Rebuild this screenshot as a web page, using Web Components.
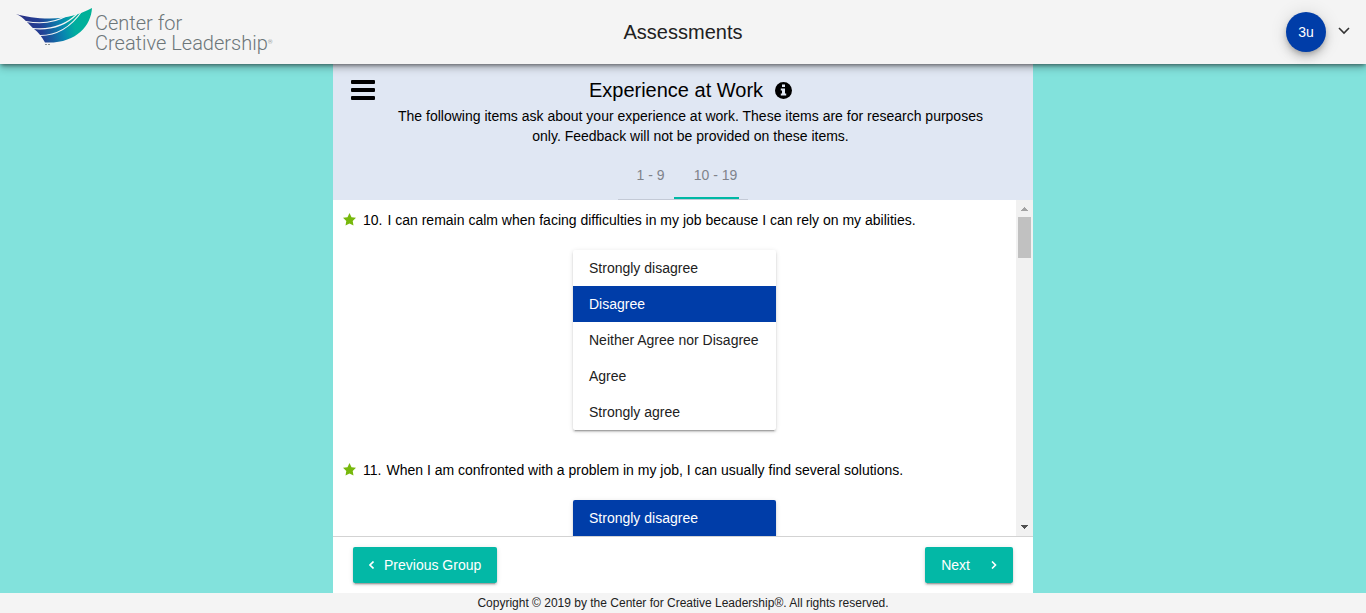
<!DOCTYPE html>
<html lang="en">
<head>
<meta charset="utf-8">
<title>Assessments</title>
<style>
  html, body { margin: 0; height: 100%; }
  body { font: 14px/20px "Liberation Sans", Arial, sans-serif; color: #000; background: #82e2dc; }
</style>
</head>
<body>
<ccl-app></ccl-app>

<template id="t-app">
  <style>
    :host { display: flex; flex-direction: column; height: 100vh; }
    main { flex: 1; min-height: 0; display: flex; flex-direction: column; width: 100%; max-width: 700px; margin: 0 auto; background: #fff; }
    ccl-questions { flex: 1; min-height: 0; }
    footer { background: #f4f4f4; font-size: 12px; line-height: 20px; text-align: center; color: #212121; }
  </style>
  <ccl-header>Assessments</ccl-header>
  <main>
    <ccl-group-intro>
      <span slot="title">Experience at Work</span>
      The following items ask about your experience at work. These items are for research purposes only. Feedback will not be provided on these items.
    </ccl-group-intro>
    <ccl-questions>
      <ccl-question number="10" selected="1">I can remain calm when facing difficulties in my job because I can rely on my abilities.</ccl-question>
      <ccl-question number="11" selected="0">When I am confronted with a problem in my job, I can usually find several solutions.</ccl-question>
    </ccl-questions>
    <ccl-pager></ccl-pager>
  </main>
  <footer>Copyright © 2019 by the Center for Creative Leadership®. All rights reserved.</footer>
</template>

<template id="t-header">
  <style>
    :host { display: grid; grid-template-columns: 1fr auto 1fr; align-items: center; height: 64px; padding: 0 16px; background: #f4f4f4; position: relative; z-index: 2; box-shadow: 0 2px 4px -1px rgba(0,0,0,.5), 0 4px 8px rgba(0,0,0,.24); }
    h1 { margin: 0; font-size: 20px; line-height: 28px; font-weight: 400; color: #212121; }
    .user { justify-self: end; display: flex; align-items: center; gap: 12px; }
    .user button { border: 0; padding: 0; background: none; font: inherit; display: block; }
    .user .avatar { width: 40px; height: 40px; border-radius: 50%; background: #003da8; color: #fff; box-shadow: 0 3px 5px -1px rgba(0,0,0,.2), 0 6px 10px rgba(0,0,0,.14), 0 1px 18px rgba(0,0,0,.12); }
    svg { display: block; }
  </style>
  <ccl-logo></ccl-logo>
  <h1><slot></slot></h1>
  <div class="user">
    <button class="avatar">3u</button>
    <button aria-label="Account menu"><svg width="12" height="12" viewBox="0 0 12 12"><path d="M1 2l5 5 5-5" fill="none" stroke="#333" stroke-width="1.6"/></svg></button>
  </div>
</template>

<template id="t-logo">
  <style>
    :host { display: block; }
    a { display: flex; gap: 2px; align-items: flex-start; color: #6c7679; text-decoration: none; font: 300 20px/20px Roboto, sans-serif; white-space: nowrap; }
    svg { display: block; margin-top: -4px; }
    .name { display: block; padding-top: 2px; }
    sup { font-size: 6px; line-height: 6px; vertical-align: 6px; }
  </style>
  <a href="#" aria-label="Center for Creative Leadership">
    <svg width="77" height="40" viewBox="0 0 77 40">
      <defs><linearGradient id="g" x1="0" x2="1" y1=".1" y2="0">
        <stop offset="0" stop-color="#2b2f83"/><stop offset=".28" stop-color="#233f94"/><stop offset=".56" stop-color="#0787b0"/><stop offset=".72" stop-color="#00ae9f"/><stop offset="1" stop-color="#00b295"/>
      </linearGradient></defs>
      <path fill="url(#g)" d="M0 7C9 9.500 20 11.500 34 11.500C52 11.500 64 7 76 1C75 19 60 37 29 35.500C26 30 22 25 18 22C12 17 9 11 0 7Z"/>
      <path fill="none" stroke="#f4f4f4" stroke-width="1.1" d="M10 14.500C22 16.500 38 16.500 51 8.500M17 21.500C33 23 49 19 61 7M24 28.500C40 28.500 55 20 66 4"/>
      <path d="M29 37.500h2M32 37.500h2" stroke="#8c9294" stroke-width="1"/>
    </svg>
    <span class="name">Center for<br>Creative Leadership<sup>®</sup></span>
  </a>
</template>

<template id="t-intro">
  <style>
    :host { display: block; background: #e0e7f3; }
    .top { display: flex; align-items: flex-start; gap: 16px; padding: 14px 43px 0 18px; }
    button { font: inherit; border: 0; padding: 0; background: none; color: inherit; }
    .menu { display: block; margin-top: 2px; }
    svg { display: block; }
    .text { flex: 1; text-align: center; }
    h2 { display: flex; justify-content: center; align-items: center; gap: 12px; margin: 0; font-size: 20px; line-height: 24px; font-weight: 400; }
    p { margin: 4px 0 0; }
    nav { position: relative; display: flex; width: 130px; margin: 6px auto 0; box-sizing: border-box; border-bottom: 1px solid #c4cad6; }
    nav button { flex: 1; height: 47px; padding-bottom: 2px; color: #7f838b; }
    .ink { position: absolute; bottom: -1px; left: 56px; width: 65px; height: 2px; background: #00b8a5; border-bottom: 1px solid #c4cad6; }
  </style>
  <div class="top">
    <button class="menu" aria-label="Menu"><svg width="24" height="20"><g><rect width="24" height="4" rx="1"/><rect y="8" width="24" height="4" rx="1"/><rect y="16" width="24" height="4" rx="1"/></g></svg></button>
    <div class="text">
      <h2><slot name="title"></slot>
        <button aria-label="Information"><svg width="17" height="17" viewBox="0 0 17 17"><circle cx="8.500" cy="8.500" r="8.500"/><path fill="#e0e7f3" d="M7 2.500h3v2.500H7zM5.800 6.500H10v5h1.200v2H5.800v-2H7v-3H5.800z"/></svg></button>
      </h2>
      <p><slot></slot></p>
    </div>
  </div>
  <nav><button>1 - 9</button><button aria-current="true">10 - 19</button><span class="ink"></span></nav>
</template>

<template id="t-questions">
  <style>
    :host { display: flex; }
    .list { flex: 1; overflow-y: auto; scrollbar-width: none; }
    .bar { width: 17px; display: flex; flex-direction: column; background: #f1f1f1; }
    .bar svg { display: block; }
    .track { flex: 1; padding: 0 2px; }
    .thumb { height: 41px; background: #c1c1c1; }
  </style>
  <div class="list"><slot></slot></div>
  <div class="bar" aria-hidden="true">
    <svg width="17" height="17" shape-rendering="crispEdges"><path d="M5 11h7L8.500 7z" fill="#a3a3a3"/></svg>
    <div class="track"><div class="thumb"></div></div>
    <svg width="17" height="17" shape-rendering="crispEdges"><path d="M5 6h7L8.500 10z" fill="#505050"/></svg>
  </div>
</template>

<template id="t-question">
  <style>
    :host { display: block; padding: 10px 10px 20px; }
    .q { display: flex; align-items: flex-start; gap: 7px; }
    .q svg { display: block; margin-top: 3px; flex: none; }
    .label { display: flex; gap: 5px; }
    .options { display: flex; flex-direction: column; width: 203px; margin: 20px auto 0; border-radius: 2px; overflow: hidden; background: #fff; box-shadow: 0 3px 1px -2px rgba(0,0,0,.2), 0 2px 2px rgba(0,0,0,.14), 0 1px 5px rgba(0,0,0,.12); }
    button { font: inherit; border: 0; height: 36px; padding: 0 16px; background: none; color: #212121; text-align: left; }
    button[aria-checked="true"] { background: #003da8; color: #fff; }
  </style>
  <div class="q">
    <svg width="13" height="13" viewBox="0 0 13 13"><path fill="#77b80c" d="M6.500 0l2 4.200 4.500.6-3.300 3.200.8 4.600-4-2.200-4 2.200.8-4.600L0 4.800l4.500-.6z"/></svg>
    <div class="label" id="label"><span class="num"></span><span><slot></slot></span></div>
  </div>
  <div class="options" role="radiogroup" aria-labelledby="label"></div>
</template>

<template id="t-pager">
  <style>
    :host { display: flex; justify-content: space-between; padding: 10px 20px; border-top: 1px solid #d3d3d3; }
    button { display: flex; align-items: center; height: 36px; border: 0; border-radius: 2px; padding: 0 16px; font: inherit; color: #fff; background: #03b8a6; box-shadow: 0 3px 1px -2px rgba(0,0,0,.2), 0 2px 2px rgba(0,0,0,.14), 0 1px 5px rgba(0,0,0,.12); }
    .prev { gap: 10px; }
    .next { gap: 21px; }
    svg { display: block; fill: none; stroke: #fff; stroke-width: 1.6; }
  </style>
  <button class="prev"><svg width="5" height="8"><path d="M4.500.5L1 4l3.500 3.500"/></svg>Previous Group</button>
  <button class="next">Next<svg width="6" height="8"><path d="M1 .5L4.500 4 1 7.500"/></svg></button>
</template>

<script>
  const define = (name, template, setup) => customElements.define(name, class extends HTMLElement {
    constructor() {
      super();
      this.attachShadow({ mode: "open" });
    }
    connectedCallback() {
      if (this.shadowRoot.childNodes.length) return;
      this.shadowRoot.append(document.getElementById(template).content.cloneNode(true));
      if (setup) setup(this, this.shadowRoot);
    }
  });

  const answers = ["Strongly disagree", "Disagree", "Neither Agree nor Disagree", "Agree", "Strongly agree"];

  define("ccl-logo", "t-logo");
  define("ccl-header", "t-header");
  define("ccl-group-intro", "t-intro");
  define("ccl-questions", "t-questions", (host, root) => {
    const list = root.querySelector(".list");
    const track = root.querySelector(".track");
    const thumb = root.querySelector(".thumb");
    list.addEventListener("scroll", () => {
      const ratio = list.scrollTop / (list.scrollHeight - list.clientHeight);
      thumb.style.marginTop = Math.round(ratio * (track.clientHeight - thumb.offsetHeight)) + "px";
    });
  });
  define("ccl-question", "t-question", (host, root) => {
    root.querySelector(".num").textContent = host.getAttribute("number") + ".";
    const group = root.querySelector(".options");
    answers.forEach((text, i) => {
      const button = document.createElement("button");
      button.textContent = text;
      button.setAttribute("role", "radio");
      button.setAttribute("aria-checked", String(i === Number(host.getAttribute("selected"))));
      button.addEventListener("click", () => {
        for (const other of group.children) other.setAttribute("aria-checked", String(other === button));
      });
      group.append(button);
    });
  });
  define("ccl-pager", "t-pager");
  define("ccl-app", "t-app");
</script>
</body>
</html>
